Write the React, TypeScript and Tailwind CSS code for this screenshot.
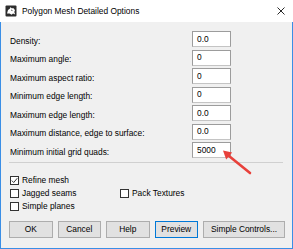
import React from 'react';

const fields = [
  { label: 'Density:', value: '0.0' },
  { label: 'Maximum angle:', value: '0' },
  { label: 'Maximum aspect ratio:', value: '0' },
  { label: 'Minimum edge length:', value: '0' },
  { label: 'Maximum edge length:', value: '0.0' },
  { label: 'Maximum distance, edge to surface:', value: '0.0' },
  { label: 'Minimum initial grid quads:', value: '5000' },
];

function Checkbox({ checked, label }: { checked?: boolean; label: string }) {
  return (
    <div className="flex items-center gap-[3px] h-[13px]">
      <div className="w-[9px] h-[9px] bg-white border border-[#333] flex items-center justify-center">
        {checked && (
          <svg width="7" height="7" viewBox="0 0 7 7">
            <path d="M0.8 3.6 L2.7 5.5 L6.3 1.2" fill="none" stroke="#222" strokeWidth="0.9" />
          </svg>
        )}
      </div>
      <span>{label}</span>
    </div>
  );
}

function Button({ children, primary, wide }: { children: React.ReactNode; primary?: boolean; wide?: boolean }) {
  return (
    <div
      className={`h-[17px] flex items-center justify-center bg-[#e1e1e1] border ${
        primary ? 'border-[#0078d7]' : 'border-[#adadad]'
      } ${wide ? 'w-[82px]' : 'w-[43.5px]'}`}
    >
      {children}
    </div>
  );
}

export default function App() {
  return (
    <div className="relative w-[293px] h-[249px] bg-[#f0f0f0] text-black text-[8.4px] leading-none font-['Liberation_Sans',Arial,sans-serif]">
      {/* Title bar */}
      <div className="h-[22px] bg-white flex items-center pl-[5px] pr-[8px]">
        <svg width="12" height="12" viewBox="0 0 12 12">
          <rect x="0.5" y="0.5" width="11" height="11" rx="1" fill="#2d2d2d" />
          <path d="M2 8.5 L3 5 L5 3.5 L5.6 2 L6.5 3.3 L8.6 3.3 L10 5.2 L9.3 7 L10.2 9.6 L8 8.6 L6.6 9.8 L4.6 8.6 Z" fill="#fff" />
          <path d="M6 5 L7.5 5.6" stroke="#2d2d2d" strokeWidth="0.8" />
        </svg>
        <span className="ml-[5px] text-[8.4px]">Polygon Mesh Detailed Options</span>
        <div className="flex-1" />
        <svg width="8" height="8" viewBox="0 0 8 8">
          <path d="M0.5 0.5 L7.5 7.5 M7.5 0.5 L0.5 7.5" stroke="#111" strokeWidth="0.9" />
        </svg>
      </div>

      {/* Body */}
      <div className="h-[227px] border-x border-b border-[#3a8ee6] pl-[9px] pt-[9px]">
        <div className="flex flex-col gap-[2.5px]">
          {fields.map((f) => (
            <div key={f.label} className="grid grid-cols-[182px_39px] items-center">
              <span className="translate-y-[1.5px]">{f.label}</span>
              <div className="h-[16px] bg-white border border-[#9c9c9c] border-b-[#c4c4c4] flex items-center pl-[4px]">
                {f.value}
              </div>
            </div>
          ))}
        </div>

        <div className="mt-[4px] ml-[-1px] w-[274px] h-px bg-[#d0d0d0]" />

        <div className="mt-[11px] grid grid-cols-[110px_auto]">
          <Checkbox checked label="Refine mesh" />
          <div />
          <Checkbox label="Jagged seams" />
          <Checkbox label="Pack Textures" />
          <Checkbox label="Simple planes" />
          <div />
        </div>

        <div className="mt-[8px] ml-[-1px] flex gap-[5px]">
          <Button>OK</Button>
          <Button>Cancel</Button>
          <Button>Help</Button>
          <Button primary>Preview</Button>
          <Button wide>Simple Controls...</Button>
        </div>
      </div>

      {/* Annotation arrow */}
      <svg className="absolute left-0 top-0 pointer-events-none" width="293" height="249" viewBox="0 0 293 249">
        <line x1="250" y1="173" x2="229" y2="156" stroke="#e8413b" strokeWidth="2.6" strokeLinecap="round" />
        <polygon points="223,150.5 232.2,152.6 226.2,159.6" fill="#e8413b" />
      </svg>
    </div>
  );
}
